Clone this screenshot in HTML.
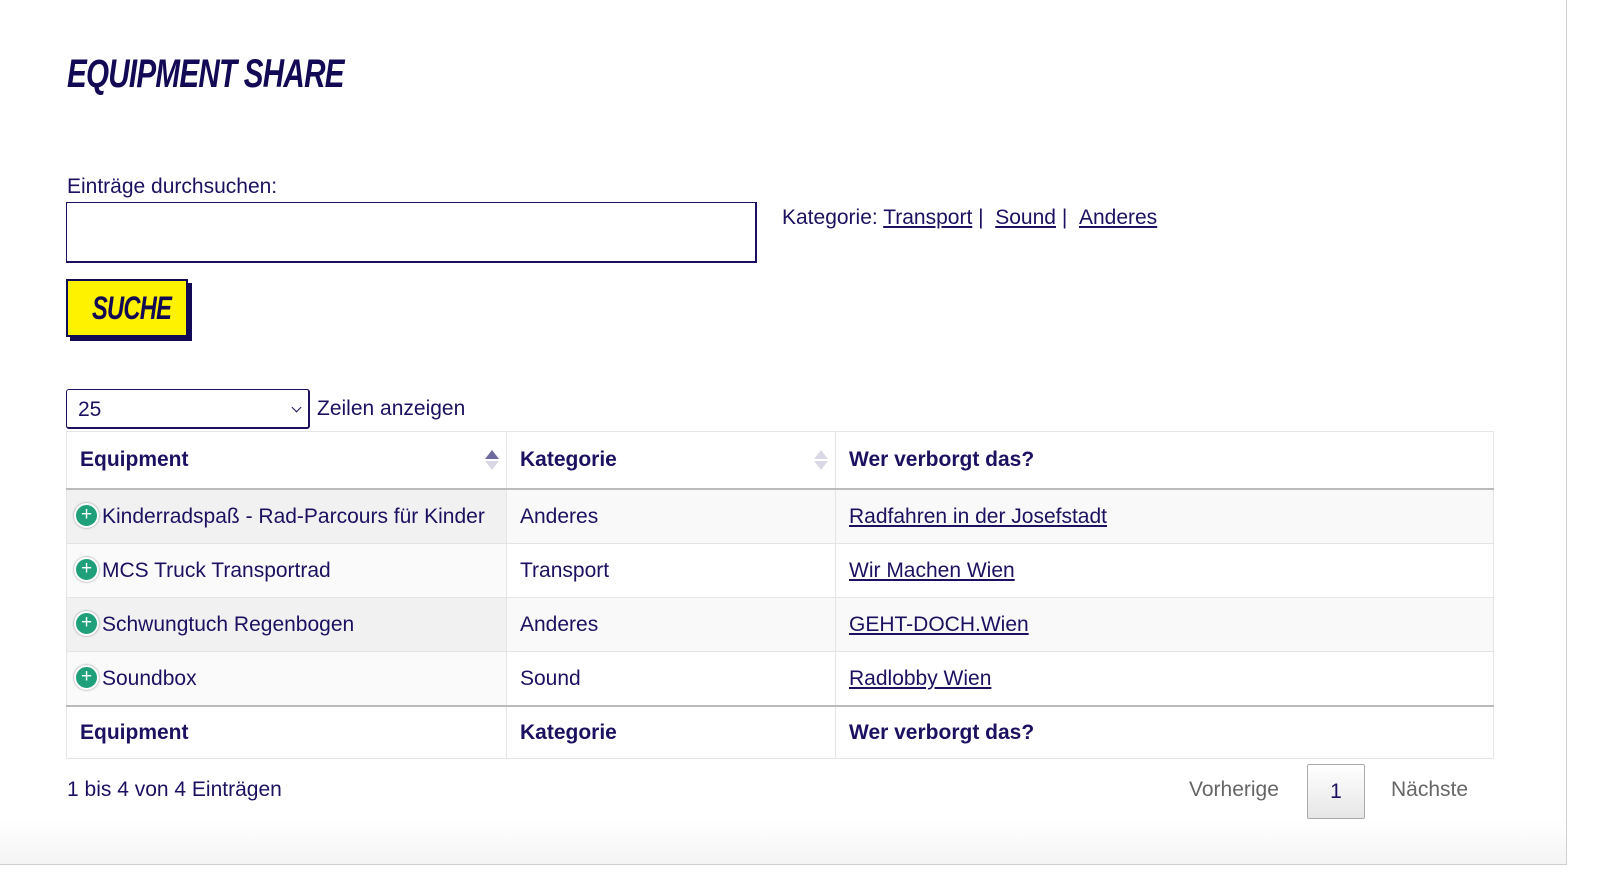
<!DOCTYPE html>
<html><head><meta charset="utf-8"><style>
body{margin:0;width:1600px;height:884px;background:#fff;font-family:"Liberation Sans",Arial,sans-serif;color:#1b1160;position:relative;overflow:hidden}
.frame{position:absolute;left:0;top:0;width:1566px;height:864px;border-right:1px solid #cfcfcf;border-bottom:1px solid #cfcfcf;background:linear-gradient(#fff 820px,#f4f4f4 864px)}
.title{position:absolute;left:67px;top:52px;font-size:40px;font-weight:900;font-style:italic;letter-spacing:-1px;transform:scaleX(.74);transform-origin:left;color:#130a55;white-space:nowrap}
.lbl{position:absolute;left:67px;top:175px;font-size:21px}
.inp{position:absolute;left:66px;top:202px;width:688px;height:58px;border:1px solid #1b1160;border-bottom-width:2px;border-right-width:2px}
.kat{position:absolute;left:782px;top:206px;font-size:21px}
.kat a{color:#1b1160;text-decoration:underline}
.btn{position:absolute;left:66px;top:279px;width:118px;height:54px;background:#fff200;border:2px solid #130a55;box-shadow:4px 4px 0 #130a55;color:#130a55}
.btn span{position:absolute;left:24px;top:0;font-size:32px;font-weight:900;font-style:italic;line-height:54px;transform:scaleX(.74);transform-origin:left;letter-spacing:-1px}
.sel{position:absolute;left:66px;top:389px;width:244px;height:40px;border:1px solid #1b1160;border-radius:3px;font-size:21px;line-height:40px;padding-left:11px;box-sizing:border-box;border-bottom-width:2px;border-right-width:2px}
.sel:after{content:"";position:absolute;right:8px;top:14px;width:6px;height:6px;border-right:1.3px solid #1b1160;border-bottom:1.3px solid #1b1160;transform:rotate(45deg)}
.zl{position:absolute;left:317px;top:397px;font-size:21px}
table{position:absolute;left:66px;top:431px;border-collapse:collapse;width:1428px;font-size:21px}
td,th{border:1px solid #e4e4e4;text-align:left;padding:0 0 0 13px}
th{height:56px;font-weight:bold;position:relative}
thead th{border-bottom:2px solid #bbb}
tfoot th{border-top:2px solid #bbb;height:51px}
tbody td{height:53px}
tbody tr.o td{background:#f9f9f9}
tbody tr.o td.s{background:#f1f1f1}
tbody tr.e td.s{background:#fafafa}
td a{color:#1b1160;text-decoration:underline}
.pl{display:inline-block;width:21px;height:21px;border-radius:50%;background:#1fa07a;border:2px solid #fff;box-shadow:0 0 2px #888;color:#fff;font-size:19px;line-height:20px;text-align:center;vertical-align:middle;margin:-2px 3px 0 -6px}
.ar{position:absolute;right:14px;top:18px;width:0}
.ar:before{content:"";position:absolute;left:-7px;top:0;border:7px solid transparent;border-bottom:9px solid #6e6a9e;border-top:0}
.ar:after{content:"";position:absolute;left:-7px;top:11px;border:7px solid transparent;border-top:9px solid #dad8e6;border-bottom:0}
.ar.n:before{border-bottom-color:#dad8e6}
.info{position:absolute;left:67px;top:778px;font-size:21px}
.pg{position:absolute;top:778px;font-size:21px;color:#666}
.pb{position:absolute;left:1307px;top:764px;width:56px;height:53px;border:1px solid #aaa;border-radius:2px;background:linear-gradient(#fff,#e6e6e6);text-align:center;line-height:53px;font-size:21px;color:#1b1160}
</style></head><body><div class="frame"></div>
<div class="title">EQUIPMENT SHARE</div>
<div class="lbl">Einträge durchsuchen:</div>
<div class="inp"></div>
<div class="kat">Kategorie: <a>Transport</a> | &nbsp;<a>Sound</a> | &nbsp;<a>Anderes</a></div>
<div class="btn"><span>SUCHE</span></div>
<div class="sel">25</div>
<div class="zl">Zeilen anzeigen</div>
<table>
<colgroup><col style="width:440px"><col style="width:329px"><col></colgroup>
<thead><tr><th>Equipment<span class="ar"></span></th><th>Kategorie<span class="ar n"></span></th><th>Wer verborgt das?</th></tr></thead>
<tbody>
<tr class="o"><td class="s"><span class="pl">+</span>Kinderradspaß - Rad-Parcours für Kinder</td><td>Anderes</td><td><a>Radfahren in der Josefstadt</a></td></tr>
<tr class="e"><td class="s"><span class="pl">+</span>MCS Truck Transportrad</td><td>Transport</td><td><a>Wir Machen Wien</a></td></tr>
<tr class="o"><td class="s"><span class="pl">+</span>Schwungtuch Regenbogen</td><td>Anderes</td><td><a>GEHT-DOCH.Wien</a></td></tr>
<tr class="e"><td class="s"><span class="pl">+</span>Soundbox</td><td>Sound</td><td><a>Radlobby Wien</a></td></tr>
</tbody>
<tfoot><tr><th>Equipment</th><th>Kategorie</th><th>Wer verborgt das?</th></tr></tfoot>
</table>
<div class="info">1 bis 4 von 4 Einträgen</div>
<div class="pg" style="left:1189px">Vorherige</div>
<div class="pb">1</div>
<div class="pg" style="left:1391px">Nächste</div>
</body></html>
